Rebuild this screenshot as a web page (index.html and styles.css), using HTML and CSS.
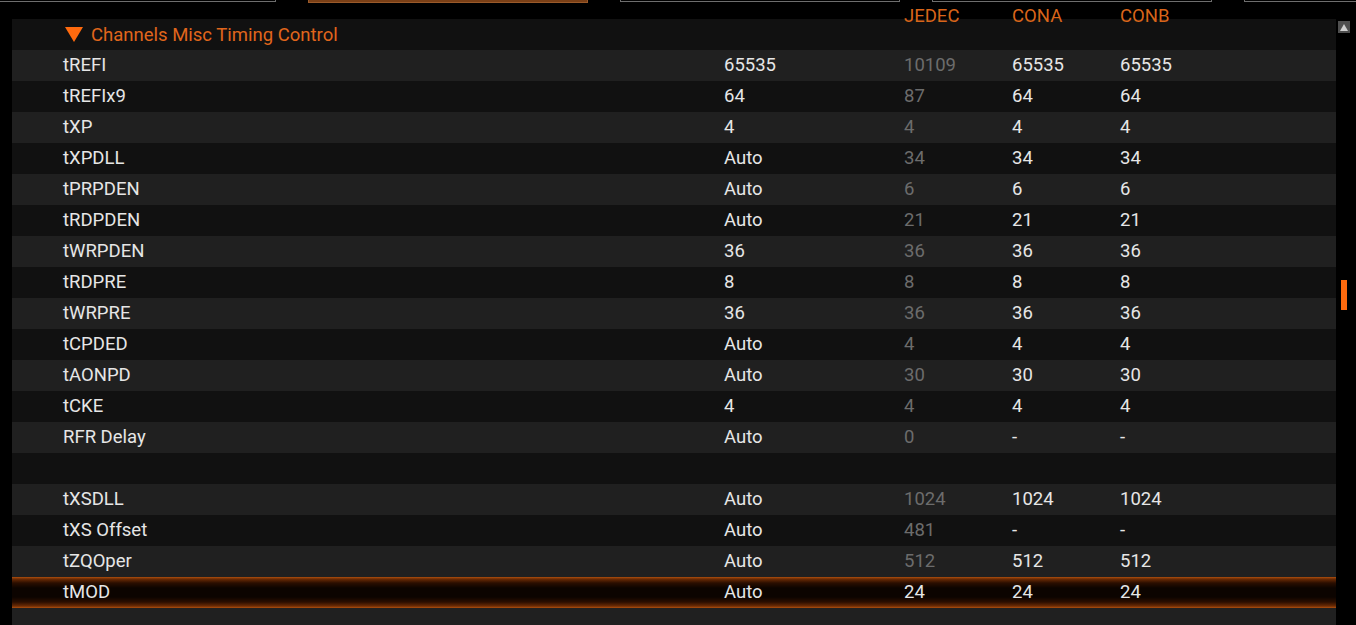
FILE: index.html
```html
<!DOCTYPE html>
<html>
<head>
<meta charset="utf-8">
<link rel="stylesheet" href="styles.css">
</head>
<body>
<div class="tabs">
  <div class="tab tab-first"></div>
  <div class="tab tab-active"></div>
  <div class="tab"></div>
  <div class="tab"></div>
  <div class="tab tab-last"></div>
</div>
<div class="cols colhead">
  <span class="c-jedec">JEDEC</span>
  <span class="c-cona">CONA</span>
  <span class="c-conb">CONB</span>
</div>
<div class="main">
  <div class="panel">
    <div class="section">
      <svg class="caret" width="18" height="15" viewBox="0 0 18 15"><polygon points="0,0 18,0 9,15" fill="#ff6a0e"/></svg>
      <span>Channels Misc Timing Control</span>
    </div>
    <div class="rows">
      <div class="cols row"><span class="c-label">tREFI</span><span class="c-val">65535</span><span class="c-jedec">10109</span><span class="c-cona">65535</span><span class="c-conb">65535</span></div>
      <div class="cols row"><span class="c-label">tREFIx9</span><span class="c-val">64</span><span class="c-jedec">87</span><span class="c-cona">64</span><span class="c-conb">64</span></div>
      <div class="cols row"><span class="c-label">tXP</span><span class="c-val">4</span><span class="c-jedec">4</span><span class="c-cona">4</span><span class="c-conb">4</span></div>
      <div class="cols row"><span class="c-label">tXPDLL</span><span class="c-val">Auto</span><span class="c-jedec">34</span><span class="c-cona">34</span><span class="c-conb">34</span></div>
      <div class="cols row"><span class="c-label">tPRPDEN</span><span class="c-val">Auto</span><span class="c-jedec">6</span><span class="c-cona">6</span><span class="c-conb">6</span></div>
      <div class="cols row"><span class="c-label">tRDPDEN</span><span class="c-val">Auto</span><span class="c-jedec">21</span><span class="c-cona">21</span><span class="c-conb">21</span></div>
      <div class="cols row"><span class="c-label">tWRPDEN</span><span class="c-val">36</span><span class="c-jedec">36</span><span class="c-cona">36</span><span class="c-conb">36</span></div>
      <div class="cols row"><span class="c-label">tRDPRE</span><span class="c-val">8</span><span class="c-jedec">8</span><span class="c-cona">8</span><span class="c-conb">8</span></div>
      <div class="cols row"><span class="c-label">tWRPRE</span><span class="c-val">36</span><span class="c-jedec">36</span><span class="c-cona">36</span><span class="c-conb">36</span></div>
      <div class="cols row"><span class="c-label">tCPDED</span><span class="c-val">Auto</span><span class="c-jedec">4</span><span class="c-cona">4</span><span class="c-conb">4</span></div>
      <div class="cols row"><span class="c-label">tAONPD</span><span class="c-val">Auto</span><span class="c-jedec">30</span><span class="c-cona">30</span><span class="c-conb">30</span></div>
      <div class="cols row"><span class="c-label">tCKE</span><span class="c-val">4</span><span class="c-jedec">4</span><span class="c-cona">4</span><span class="c-conb">4</span></div>
      <div class="cols row"><span class="c-label">RFR Delay</span><span class="c-val">Auto</span><span class="c-jedec">0</span><span class="c-cona">-</span><span class="c-conb">-</span></div>
      <div class="cols row"></div>
      <div class="cols row"><span class="c-label">tXSDLL</span><span class="c-val">Auto</span><span class="c-jedec">1024</span><span class="c-cona">1024</span><span class="c-conb">1024</span></div>
      <div class="cols row"><span class="c-label">tXS Offset</span><span class="c-val">Auto</span><span class="c-jedec">481</span><span class="c-cona">-</span><span class="c-conb">-</span></div>
      <div class="cols row"><span class="c-label">tZQOper</span><span class="c-val">Auto</span><span class="c-jedec">512</span><span class="c-cona">512</span><span class="c-conb">512</span></div>
      <div class="cols row row-selected"><span class="c-label">tMOD</span><span class="c-val">Auto</span><span class="c-jedec">24</span><span class="c-cona">24</span><span class="c-conb">24</span></div>
      <div class="cols row"></div>
    </div>
  </div>
  <div class="scrollbar">
    <div class="scroll-up"><svg width="8" height="7" viewBox="0 0 8 7"><polygon points="4,0 8,7 0,7" fill="#d0d0d0"/></svg></div>
    <div class="scroll-thumb"></div>
  </div>
</div>
</body>
</html>
```

FILE: styles.css
```css
html, body {
  margin: 0;
  padding: 0;
  background: #000;
  height: 625px;
  overflow: hidden;
}
body {
  font-family: "Roboto", "Liberation Sans", sans-serif;
  font-size: 18.5px;
  color: #e6e6e6;
}
.tabs {
  display: flex;
  gap: 32px;
  height: 3px;
  width: 1356px;
  overflow: hidden;
}
.tab {
  box-sizing: border-box;
  flex: 0 0 280px;
  height: 2px;
  border: 1px solid #6e6e6e;
  border-top: 0;
}
.tab-first {
  flex-basis: 276px;
  border-left: 0;
}
.tab-last {
  flex: 1 0 0;
  border-right: 0;
}
.tab-active {
  height: 3px;
  flex-basis: 280px;
  background: #7a3f16;
  border-color: #9a5a2a;
}
.cols {
  display: grid;
  grid-template-columns: 51px 661px 180px 108px 108px 1fr;
  align-items: center;
}
.c-label { grid-column: 2; }
.c-val { grid-column: 3; }
.c-jedec { grid-column: 4; }
.c-cona { grid-column: 5; }
.c-conb { grid-column: 6; }
.colhead {
  position: relative;
  z-index: 1;
  height: 16px;
  margin-left: 12px;
  width: 1324px;
  color: #d8651a;
  align-items: start;
}
.colhead span {
  line-height: 16px;
  margin-top: 5px;
}
.main {
  display: flex;
  margin-left: 12px;
}
.panel {
  width: 1324px;
  flex: 0 0 1324px;
}
.section {
  height: 31px;
  background: #111;
  display: flex;
  align-items: center;
  gap: 8px;
  padding-left: 53px;
  color: #e0661c;
}
.caret {
  display: block;
}
.row {
  height: 31px;
  line-height: 31px;
}
.rows .row:nth-child(odd) { background: #202020; }
.rows .row:nth-child(even) { background: #111; }
.row .c-jedec { color: #6c6c6c; }
.rows .row.row-selected {
  background: linear-gradient(to bottom,
    #b0500e 0px, #6a2a04 2px, #2a0e00 6px, #0c0400 11px,
    #0c0400 20px, #2a0e00 25px, #6a2a04 29px, #b0500e 31px);
}
.row.row-selected .c-jedec { color: #e6e6e6; }
.scrollbar {
  width: 20px;
  flex: 0 0 20px;
  padding-top: 2px;
  display: flex;
  flex-direction: column;
}
.scroll-up {
  width: 12px;
  height: 12px;
  margin-left: 2px;
  background: #4f4f4f;
  display: flex;
  align-items: center;
  justify-content: center;
}
.scroll-up svg { display: block; }
.scroll-thumb {
  width: 6px;
  height: 30px;
  margin-left: 5px;
  margin-top: 247px;
  background: #ff6a0e;
}
```
